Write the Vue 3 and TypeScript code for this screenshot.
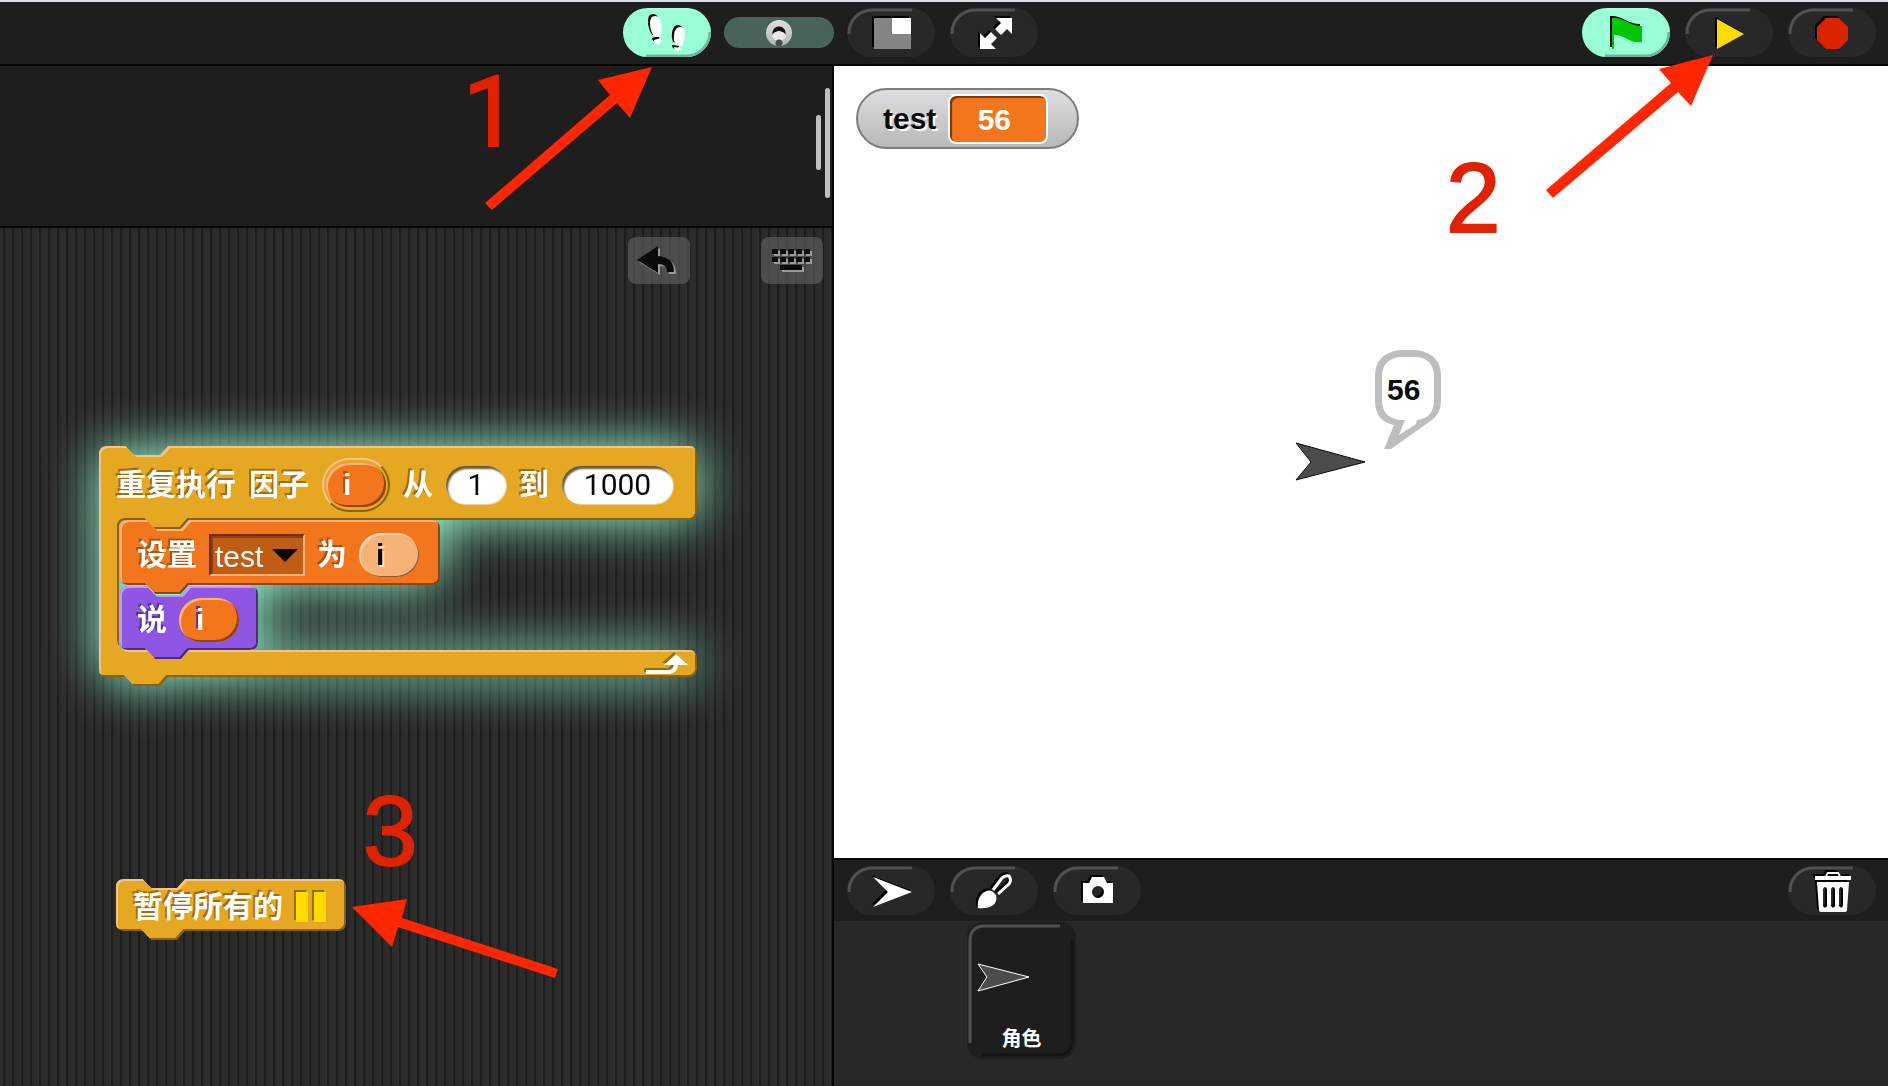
<script setup lang="ts">
import { ref } from 'vue'

interface Palette {
  base: string
  light: string
  dark: string
}

interface Shape {
  id: string
  w: number
  h: number
  d: string
  color: Palette
}

const amber: Palette = { base: '#e6a822', light: '#f0c48c', dark: '#8a6210' }
const orange: Palette = { base: '#f3761d', light: '#f9b27c', dark: '#93430c' }
const purple: Palette = { base: '#8f56e3', light: '#bf9cf2', dark: '#4e2a86' }

// A command block: notch in the top edge, matching tab on the bottom edge.
function commandPath(w: number, h: number): string {
  return [
    `M0 8 Q0 0 8 0 H27 L35 9 H61 L69 0 H${w - 8} Q${w} 0 ${w} 8`,
    `V${h - 8} Q${w} ${h} ${w - 8} ${h} H69 L61 ${h + 9} H35 L27 ${h} H8 Q0 ${h} 0 ${h - 8} Z`,
  ].join(' ')
}

// A C-shaped block with an open slot between its header and footer.
function loopPath(w: number, head: number, slot: number, foot: number): string {
  const low = head + slot
  const h = low + foot
  return [
    `M0 8 Q0 0 8 0 H27 L35 9 H61 L69 0 H${w - 8} Q${w} 0 ${w} 8`,
    `V${head - 8} Q${w} ${head} ${w - 8} ${head} H90 L82 ${head + 9} H56 L48 ${head} H28 Q20 ${head} 20 ${head + 8}`,
    `V${low - 8} Q20 ${low} 28 ${low} H${w - 8} Q${w} ${low} ${w} ${low + 8}`,
    `V${h - 8} Q${w} ${h} ${w - 8} ${h} H69 L61 ${h + 9} H35 L27 ${h} H8 Q0 ${h} 0 ${h - 8} Z`,
  ].join(' ')
}

const shapes: Record<string, Shape> = {
  loop: { id: 'loop', w: 598, h: 231, d: loopPath(598, 74, 130, 27), color: amber },
  set: { id: 'set', w: 320, h: 65, d: commandPath(320, 65), color: orange },
  say: { id: 'say', w: 138, h: 64, d: commandPath(138, 64), color: purple },
  pause: { id: 'pause', w: 230, h: 52, d: commandPath(230, 52), color: amber },
}

const from = ref('1')
const to = ref('1000')
const variable = ref('test')
const speed = ref(50)
</script>

<template>
  <div class="ide">
    <header class="toolbar">
      <div class="tools tools-left">
        <button class="pill lit" aria-label="单步执行">
          <svg width="88" height="49" viewBox="0 0 88 49">
            <path class="shine" d="M25 1 H66" />
            <path class="shade" d="M23 48 H63 A24 24 0 0 0 87 24" />
            <g class="icon">
              <path d="M27 15 Q27 8 32 8 Q37 8 38 15 Q40 21 37 29 L31 29 Q27 22 27 15 Z M31 32 L38 30 Q39 36 35 36 Q31 35 31 32 Z" fill="#fff" />
              <path d="M51 27 Q52 19 57 19 Q62 19 62 26 Q62 32 59 38 L52 36 Q50 31 51 27 Z M51 39 L58 40 Q57 43 54 43 Q51 42 51 39 Z" fill="#fff" />
            </g>
          </svg>
        </button>
        <input v-model="speed" class="speed" type="range" min="0" max="100" aria-label="速度" />
      </div>
      <div class="tools tools-right">
        <button class="pill" aria-label="舞台大小">
          <svg width="88" height="49" viewBox="0 0 88 49">
            <path class="edge" d="M2 26 A23 23 0 0 1 25 2 H65" />
            <g class="icon">
              <rect x="27" y="10" width="37" height="31" fill="#858383" />
              <rect x="45" y="10" width="19" height="16" fill="#fff" />
            </g>
          </svg>
        </button>
        <button class="pill" aria-label="全屏">
          <svg width="88" height="49" viewBox="0 0 88 49">
            <path class="edge" d="M2 26 A23 23 0 0 1 25 2 H65" />
            <path class="icon" fill="#fff" d="M46 10 H62 V26 L57 21 L51 27 L45 21 L51 15 Z M30 25 L35 30 L41 24 L47 30 L41 36 L46 41 H30 Z" />
          </svg>
        </button>
        <span class="spring"></span>
        <button class="pill lit" aria-label="开始">
          <svg width="88" height="49" viewBox="0 0 88 49">
            <path class="shine" d="M25 1 H66" />
            <path class="shade" d="M23 48 H63 A24 24 0 0 0 87 24" />
            <path class="icon" fill="#00c800" d="M30 10 C42 9 47 18 60 18 V34 C47 36 43 26 32 27 V41 H30 Z" />
          </svg>
        </button>
        <button class="pill" aria-label="继续">
          <svg width="88" height="49" viewBox="0 0 88 49">
            <path class="edge" d="M2 26 A23 23 0 0 1 25 2 H65" />
            <path class="icon" fill="#ffdc00" d="M32 11 L59 26 L32 41 Z" />
          </svg>
        </button>
        <button class="pill" aria-label="停止">
          <svg width="88" height="49" viewBox="0 0 88 49">
            <path class="edge" d="M2 26 A23 23 0 0 1 25 2 H65" />
            <path class="icon" fill="#dc2300" d="M38 10 H51 L60 19 V32 L51 41 H38 L29 32 V19 Z" />
          </svg>
        </button>
      </div>
    </header>

    <main class="columns">
      <section class="editor">
        <div class="palette">
          <span class="bar bar-short"></span>
          <span class="bar bar-long"></span>
        </div>

        <div class="scripts">
          <div class="script-tools">
            <button class="tool" aria-label="撤销">
              <svg width="62" height="47" viewBox="0 0 62 47">
                <path fill="#0a0a0a" d="M9 23 L30 9 V19 Q46 20 46 35 H39 Q39 27 30 27 V36 Z" />
              </svg>
            </button>
            <button class="tool" aria-label="键盘输入">
              <svg width="62" height="47" viewBox="0 0 62 47">
                <g fill="#0a0a0a">
                  <template v-for="n in 5" :key="n">
                    <rect :x="3 + n * 8" y="12" width="6" height="5" />
                    <rect :x="3 + n * 8" y="20" width="6" height="5" />
                  </template>
                  <rect x="19" y="28" width="22" height="5" />
                </g>
              </svg>
            </button>
          </div>

          <div class="loop glowing">
            <svg class="shape" :width="shapes.loop.w" :height="shapes.loop.h">
              <clipPath id="clip-loop"><path :d="shapes.loop.d" /></clipPath>
              <g clip-path="url(#clip-loop)">
                <path :d="shapes.loop.d" :fill="shapes.loop.color.dark" />
                <g transform="translate(-2 -2)">
                  <path :d="shapes.loop.d" :fill="shapes.loop.color.light" />
                  <g clip-path="url(#clip-loop)">
                    <path :d="shapes.loop.d" :fill="shapes.loop.color.base" transform="translate(4 4)" />
                  </g>
                </g>
              </g>
            </svg>
            <div class="row loop-head">
              <span>重复执行</span>
              <span>因子</span>
              <span class="socket"><span class="var"><b>i</b></span></span>
              <span>从</span>
              <input v-model="from" class="num num-short" aria-label="从" />
              <span>到</span>
              <input v-model="to" class="num num-long" aria-label="到" />
            </div>
            <div class="loop-body">
              <div class="command set">
                <svg class="shape" :width="shapes.set.w" :height="shapes.set.h">
                  <clipPath id="clip-set"><path :d="shapes.set.d" /></clipPath>
                  <g clip-path="url(#clip-set)">
                    <path :d="shapes.set.d" :fill="shapes.set.color.dark" />
                    <g transform="translate(-2 -2)">
                      <path :d="shapes.set.d" :fill="shapes.set.color.light" />
                      <g clip-path="url(#clip-set)">
                        <path :d="shapes.set.d" :fill="shapes.set.color.base" transform="translate(4 4)" />
                      </g>
                    </g>
                  </g>
                </svg>
                <div class="row">
                  <span>设置</span>
                  <span class="choice">
                    <select v-model="variable" aria-label="变量">
                      <option>test</option>
                    </select>
                    <svg width="26" height="13" viewBox="0 0 26 13"><path d="M0 0 H26 L13 13 Z" fill="#0a0a0a" /></svg>
                  </span>
                  <span>为</span>
                  <span class="var pale"><b>i</b></span>
                </div>
              </div>
              <div class="command say">
                <svg class="shape" :width="shapes.say.w" :height="shapes.say.h">
                  <clipPath id="clip-say"><path :d="shapes.say.d" /></clipPath>
                  <g clip-path="url(#clip-say)">
                    <path :d="shapes.say.d" :fill="shapes.say.color.dark" />
                    <g transform="translate(-2 -2)">
                      <path :d="shapes.say.d" :fill="shapes.say.color.light" />
                      <g clip-path="url(#clip-say)">
                        <path :d="shapes.say.d" :fill="shapes.say.color.base" transform="translate(4 4)" />
                      </g>
                    </g>
                  </g>
                </svg>
                <div class="row">
                  <span>说</span>
                  <span class="var"><b>i</b></span>
                </div>
              </div>
            </div>
            <div class="loop-foot">
              <svg class="return" width="44" height="24" viewBox="0 0 44 24">
                <path d="M2 19 H24 Q32 19 32 10" fill="none" stroke="#fff" stroke-width="4" />
                <path d="M20 12 L32 1 L44 12 Z" fill="#fff" />
              </svg>
            </div>
          </div>

          <div class="command pause">
            <svg class="shape" :width="shapes.pause.w" :height="shapes.pause.h">
              <clipPath id="clip-pause"><path :d="shapes.pause.d" /></clipPath>
              <g clip-path="url(#clip-pause)">
                <path :d="shapes.pause.d" :fill="shapes.pause.color.dark" />
                <g transform="translate(-2 -2)">
                  <path :d="shapes.pause.d" :fill="shapes.pause.color.light" />
                  <g clip-path="url(#clip-pause)">
                    <path :d="shapes.pause.d" :fill="shapes.pause.color.base" transform="translate(4 4)" />
                  </g>
                </g>
              </g>
            </svg>
            <div class="row">
              <span>暂停所有的</span>
              <svg class="bars" width="32" height="32" viewBox="0 0 32 32">
                <rect x="1" y="1" width="12" height="30" fill="#ffdc00" />
                <rect x="19" y="1" width="12" height="30" fill="#ffdc00" />
              </svg>
            </div>
          </div>
        </div>
      </section>

      <section class="world">
        <div class="stage">
          <div class="monitor">
            <span>test</span>
            <output>56</output>
          </div>
          <svg class="turtle" width="72" height="42" viewBox="0 0 72 42">
            <path d="M2 2 L71 21 L2 39 L17 21 Z" fill="#4c4c4c" stroke="#0a0a0a" stroke-width="1" />
          </svg>
          <div class="bubble">
            <svg width="70" height="102" viewBox="0 0 70 102">
              <path
                d="M24 4 H43 Q63 6 63 26 V52 Q63 64 53 71 L15 95 L24 72 Q4 70 4 52 V26 Q4 6 24 4 Z"
                fill="#fff"
              />
              <path
                fill="#bebebe"
                fill-rule="evenodd"
                d="M24 0 H42 Q66 4 66 26 V51 Q66 65 54 72 L16 99 H9 L19 75 Q0 71 0 51 V26 Q0 4 24 0 Z M25 7 H42 Q59 9 59 27 V50 Q59 68 42 70 L41 74 L24 85 L30 70 H25 Q7 68 7 50 V27 Q7 9 25 7 Z"
              />
            </svg>
            <span>56</span>
          </div>
        </div>

        <div class="corral-bar">
          <button class="pill" aria-label="新角色">
            <svg width="88" height="49" viewBox="0 0 88 49">
              <path class="edge" d="M2 26 A23 23 0 0 1 25 2 H65" />
              <path class="icon" fill="#fff" d="M26 11 L65 26 L26 41 L41 26 Z" />
            </svg>
          </button>
          <button class="pill" aria-label="绘制角色">
            <svg width="88" height="49" viewBox="0 0 88 49">
              <path class="edge" d="M2 26 A23 23 0 0 1 25 2 H65" />
              <g class="icon">
                <path d="M43 24 L52 12 Q55 9 59 10 Q62 14 59 18 L48 28" fill="none" stroke="#fff" stroke-width="3" />
                <path d="M28 42 Q27 34 31 29 Q36 23 42 25 L46 29 Q48 36 42 40 Q36 43 28 42 Z" fill="#fff" />
              </g>
            </svg>
          </button>
          <button class="pill" aria-label="拍照">
            <svg width="88" height="49" viewBox="0 0 88 49">
              <path class="edge" d="M2 26 A23 23 0 0 1 25 2 H65" />
              <path
                class="icon"
                fill="#fff"
                fill-rule="evenodd"
                d="M30 17 H36 L39 11 H51 L54 17 H60 V37 H30 Z M45 20 A6 6 0 1 0 45 32 A6 6 0 1 0 45 20 Z"
              />
            </svg>
          </button>
          <span class="spring"></span>
          <button class="pill" aria-label="删除">
            <svg width="88" height="49" viewBox="0 0 88 49">
              <path class="edge" d="M2 26 A23 23 0 0 1 25 2 H65" />
              <g class="icon">
                <path d="M38 10 L40 7 H50 L52 10" fill="none" stroke="#fff" stroke-width="2" />
                <path
                  fill="#fff"
                  fill-rule="evenodd"
                  d="M27 10 H63 V14 H27 Z M29 16 H61 L59 44 Q59 46 56 46 H34 Q31 46 31 44 Z M35 23 V40 Q37 43 39 40 V23 Q37 19 35 23 Z M43 23 V40 Q45 43 47 40 V23 Q45 19 43 23 Z M51 23 V40 Q53 43 55 40 V23 Q53 19 51 23 Z"
                />
              </g>
            </svg>
          </button>
        </div>

        <div class="corral">
          <button class="sprite">
            <svg width="109" height="137" viewBox="0 0 109 137">
              <path class="edge" d="M3 121 V19 Q3 4 18 4 H93" />
              <path d="M105 17 V118 Q105 133 90 133 H15" fill="none" stroke="#151515" stroke-width="3" />
              <path d="M11 42 L62 55 L11 69 L20 55 Z" fill="#4c4c4c" stroke="#fff" stroke-width="1" />
            </svg>
            <span>角色</span>
          </button>
        </div>
      </section>
    </main>

    <svg class="notes" width="100%" height="100%" aria-hidden="true">
      <g fill="#ff2600">
        <path d="M652 67 L598 80 L610 95 L485 203 L492 210 L617 103 L630 118 Z" />
        <path d="M1713 55 L1659 69 L1671 83 L1546 190 L1553 198 L1678 92 L1691 106 Z" />
        <path d="M352 907 L407 899 L402 918 L558 969 L555 978 L398 927 L392 947 Z" />
      </g>
      <text class="plain-one" x="463" y="146">1</text>
      <text x="1446" y="232">2</text>
      <text x="363" y="865">3</text>
    </svg>
  </div>
</template>

<style>
body {
  background: #1e1e1e;
}
</style>

<style scoped>
.ide {
  position: relative;
  display: flex;
  flex-direction: column;
  min-height: 100vh;
  box-sizing: border-box;
  border-top: 2px solid #dcdde6;
  background: #1e1e1e;
  color: #fff;
  font: bold 30px/36px "Liberation Sans", "Noto Sans CJK SC", sans-serif;
  overflow: hidden;
}
.ide *,
.ide *::before {
  box-sizing: border-box;
}
button,
input,
select {
  margin: 0;
  padding: 0;
  border: 0;
  font: inherit;
  color: inherit;
}
svg {
  display: block;
}

.toolbar,
.columns {
  display: grid;
  grid-template-columns: 834fr 1054fr;
}
.toolbar {
  height: 64px;
  border-bottom: 2px solid #050505;
}
.tools {
  display: flex;
  padding-top: 6px;
}
.tools-left {
  justify-content: flex-end;
  gap: 13px;
}
.tools-right,
.corral-bar {
  gap: 15px;
  padding-left: 13px;
  padding-right: 12px;
}
.spring {
  flex: 1;
}
.pill {
  flex: none;
  width: 88px;
  height: 49px;
  border-radius: 25px;
  background: #282828;
  overflow: hidden;
}
.pill.lit {
  background: #99ffd6;
}
.edge,
.shine,
.shade {
  fill: none;
  stroke-width: 3;
  stroke: #4f5252;
}
.shine {
  stroke: #b8f8e0;
}
.shade {
  stroke: #72b39b;
}
.icon {
  filter: drop-shadow(-2px -2px 0 #000);
}
.speed {
  appearance: none;
  width: 110px;
  height: 31px;
  margin-top: 9px;
  border-radius: 16px;
  background: #486358;
}
.speed::-webkit-slider-thumb {
  appearance: none;
  width: 26px;
  height: 26px;
  border-radius: 50%;
  background:
    radial-gradient(circle at 13px 23px, #4a4a4a 0 3px, transparent 4px),
    radial-gradient(ellipse 7px 5px at 13px 16px, #e8e8e8 0 90%, transparent 100%),
    radial-gradient(circle at 13px 13px, #111 0 6px, transparent 7px),
    linear-gradient(#dedede, #b4b4b4);
}

.columns {
  flex: 1;
}
.editor {
  display: flex;
  flex-direction: column;
  border-right: 2px solid #050505;
}
.palette {
  display: flex;
  justify-content: flex-end;
  gap: 4px;
  height: 162px;
  padding: 22px 2px 0 0;
  border-bottom: 2px solid #050505;
}
.bar {
  width: 5px;
  border-radius: 3px;
  background: #c0c0c0;
}
.bar-short {
  height: 55px;
  margin-top: 27px;
}
.bar-long {
  height: 110px;
}
.scripts {
  position: relative;
  flex: 1;
  background: repeating-linear-gradient(90deg, #2c2c2c 0 3px, #1d1d1d 3px 5px, #292929 5px 7px, #2c2c2c 7px 9px);
}
.script-tools {
  display: flex;
  justify-content: flex-end;
  gap: 71px;
  padding: 9px 9px 0;
}
.tool {
  width: 62px;
  height: 47px;
  border-radius: 8px;
  background: rgba(100, 100, 96, 0.6);
}
.tool svg {
  filter: drop-shadow(2px 2px 0 #9a9a96);
}

.loop,
.pause {
  position: absolute;
}
.loop {
  left: 99px;
  top: 218px;
  width: 598px;
}
.pause {
  left: 116px;
  top: 651px;
  width: 230px;
  height: 52px;
}
.glowing {
  filter: drop-shadow(0 0 26px #99ffd6);
}
.shape {
  position: absolute;
  left: 0;
  top: 0;
  overflow: visible;
}
.row {
  position: relative;
  display: flex;
  align-items: center;
  gap: 12px;
  height: 100%;
  padding: 3px 0 0 17px;
  white-space: nowrap;
  text-shadow: -2px -2px 0 rgba(90, 50, 0, 0.5);
}
.loop-head {
  gap: 13px;
  height: 74px;
}
.loop-body {
  height: 130px;
  padding-left: 21px;
}
.loop-foot {
  position: relative;
  display: flex;
  justify-content: flex-end;
  height: 27px;
  padding: 3px 9px 0 0;
}
.return,
.bars {
  filter: drop-shadow(-2px -2px 0 #9a6c10);
}
.command {
  position: relative;
  height: 64px;
}
.command.pause {
  position: absolute;
  height: 52px;
}
.set {
  z-index: 1;
  width: 320px;
  margin-bottom: 2px;
}
.set .row {
  padding-top: 6px;
}
.say {
  width: 138px;
}
.say .row {
  text-shadow: -2px -2px 0 #5a3394;
}
.socket {
  display: flex;
  align-items: center;
  justify-content: center;
  width: 68px;
  height: 54px;
  border: 2px solid;
  border-color: #f0c48c #8a6210 #8a6210 #f0c48c;
  border-radius: 27px;
}
.var {
  display: flex;
  align-items: center;
  width: 60px;
  height: 44px;
  padding-left: 17px;
  border-radius: 22px;
  background: #f3761d;
  box-shadow: inset 2px 2px 0 #f9b27c, inset -2px -2px 0 #93430c;
}
.pale {
  background: #f7b27a;
  color: #0a0a0a;
  text-shadow: 2px 2px 0 #fde0c6;
  box-shadow: inset 2px 2px 0 #fbd3b0, inset -1px -1px 0 #8a5a30;
}
.num {
  height: 38px;
  border-radius: 19px;
  background: #fff;
  color: #0a0a0a;
  font: 30px/38px Roboto, "Liberation Sans", sans-serif;
  text-align: center;
  box-shadow: inset 2px 3px 2px #6b5a34, 1px 1px 0 #f0cfa0;
}
.num-short {
  width: 60px;
}
.num-long {
  width: 111px;
}
.choice {
  display: grid;
  align-items: center;
  width: 96px;
  height: 42px;
  border: 2px solid;
  border-color: #6d300a #f9b27c #f9b27c #6d300a;
  background: #c15c17;
  box-shadow: inset 2px 2px 0 #8a3f0d;
}
.choice select {
  grid-area: 1 / 1;
  appearance: none;
  width: 92px;
  height: 38px;
  padding: 3px 0 0 4px;
  background: none;
  font-weight: normal;
  line-height: 36px;
}
.choice svg {
  grid-area: 1 / 1;
  justify-self: end;
  margin-right: 5px;
  pointer-events: none;
}

.world {
  display: flex;
  flex-direction: column;
}
.stage {
  position: relative;
  flex: 1;
  padding: 22px;
  background: #fff;
  color: #0a0a0a;
}
.monitor {
  display: flex;
  align-items: center;
  gap: 12px;
  width: 223px;
  height: 61px;
  padding-left: 25px;
  border: 2px solid #7d7d7d;
  border-radius: 31px;
  background: linear-gradient(#dedee0, #b8b8b8);
  text-shadow: 2px 2px 0 #fff;
}
.monitor output {
  width: 100px;
  height: 50px;
  padding: 6px 8px 0 0;
  border: 2px solid #fff;
  border-radius: 8px;
  background: #f3761d;
  box-shadow: inset 2px 2px 1px #7a3508;
  color: #fff;
  text-align: center;
  text-shadow: none;
}
.turtle,
.bubble {
  position: absolute;
}
.turtle {
  left: 460px;
  top: 375px;
}
.bubble {
  left: 541px;
  top: 284px;
}
.bubble span {
  position: absolute;
  left: 12px;
  top: 22px;
}
.corral-bar {
  display: flex;
  height: 63px;
  padding-top: 6px;
  border-top: 2px solid #050505;
  background: #1e1e1e;
}
.corral {
  height: 165px;
  padding: 1px 0 0 133px;
  background: #282828;
}
.sprite {
  display: grid;
  width: 109px;
  height: 137px;
  border-radius: 16px;
  background: #1e1e1e;
  font-size: 20px;
  line-height: 24px;
}
.sprite svg,
.sprite span {
  grid-area: 1 / 1;
}
.sprite span {
  align-self: end;
  padding-bottom: 8px;
}

.notes {
  position: absolute;
  left: 0;
  top: -2px;
  pointer-events: none;
  overflow: visible;
}
.notes text {
  fill: #e02200;
  stroke: #e02200;
  stroke-width: 2px;
  font: 98px "Liberation Sans", sans-serif;
}
.notes .plain-one {
  font-family: Roboto, sans-serif;
}
</style>
